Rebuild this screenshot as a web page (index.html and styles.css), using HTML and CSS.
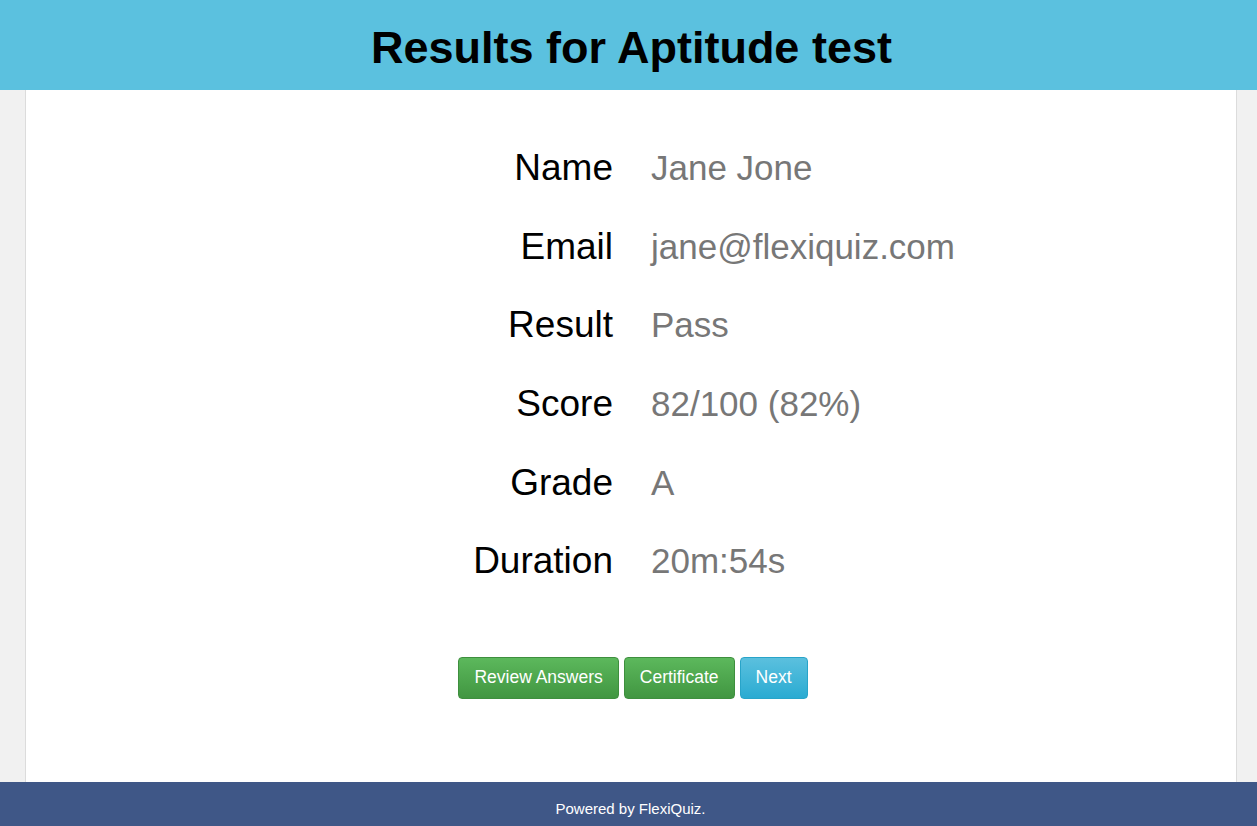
FILE: index.html
```html
<!DOCTYPE html>
<html lang="en">
<head>
<meta charset="utf-8">
<title>Results for Aptitude test</title>
<link rel="stylesheet" href="styles.css">
</head>
<body>
<div class="page">
  <header class="top">
    <h1 class="title">Results for Aptitude test</h1>
  </header>
  <main class="panel">
    <dl class="results">
      <dt>Name</dt><dd>Jane Jone</dd>
      <dt>Email</dt><dd>jane@flexiquiz.com</dd>
      <dt>Result</dt><dd>Pass</dd>
      <dt>Score</dt><dd>82/100 (82%)</dd>
      <dt>Grade</dt><dd>A</dd>
      <dt>Duration</dt><dd>20m:54s</dd>
    </dl>
    <div class="actions">
      <button class="btn btn-green">Review Answers</button>
      <button class="btn btn-green">Certificate</button>
      <button class="btn btn-blue">Next</button>
    </div>
  </main>
  <footer class="foot">Powered by FlexiQuiz.</footer>
</div>
</body>
</html>
```
FILE: styles.css
```css
html, body {
  margin: 0;
  padding: 0;
  height: 100%;
}
body {
  background: #f1f1f1;
  font-family: "Liberation Sans", Arial, sans-serif;
  color: #000;
}
.page {
  display: flex;
  flex-direction: column;
  height: 100vh;
}
.top {
  background: #5bc1df;
  height: 90px;
  display: flex;
  align-items: center;
  justify-content: center;
  flex: none;
}
.title {
  margin: 0;
  font-size: 45px;
  font-weight: bold;
  line-height: 1;
  padding-left: 6px;
  padding-top: 4px;
}
.panel {
  flex: 1;
  background: #fff;
  margin: 0 20px 0 25px;
  border-left: 1px solid #dcdcdc;
  border-right: 1px solid #dcdcdc;
  padding-top: 39px;
}
.results {
  margin: 0;
  display: grid;
  grid-template-columns: 587px 1fr;
  column-gap: 38px;
  grid-auto-rows: 78.6px;
  align-items: center;
  font-size: 35px;
}
.results dt {
  text-align: right;
  color: #000;
  font-size: 37px;
}
.results dd {
  margin: 0;
  color: #777;
}
.actions {
  display: flex;
  justify-content: center;
  gap: 5px;
  margin-top: 56px;
  padding-left: 4px;
}
.btn {
  font-family: "Liberation Sans", Arial, sans-serif;
  font-size: 17.5px;
  color: #fff;
  height: 42px;
  padding: 0 15px;
  border-radius: 4px;
  cursor: pointer;
}
.btn-green {
  background: linear-gradient(#5cb85c, #419641);
  border: 1px solid #3e8f3e;
}
.btn-blue {
  background: linear-gradient(#5bc0de, #2aabd2);
  border: 1px solid #28a4c9;
}
.foot {
  flex: none;
  height: 44px;
  background: #3f5787;
  color: #fff;
  font-size: 15px;
  display: flex;
  align-items: center;
  justify-content: center;
  padding-top: 8px;
  padding-left: 4px;
  box-sizing: border-box;
}
```
